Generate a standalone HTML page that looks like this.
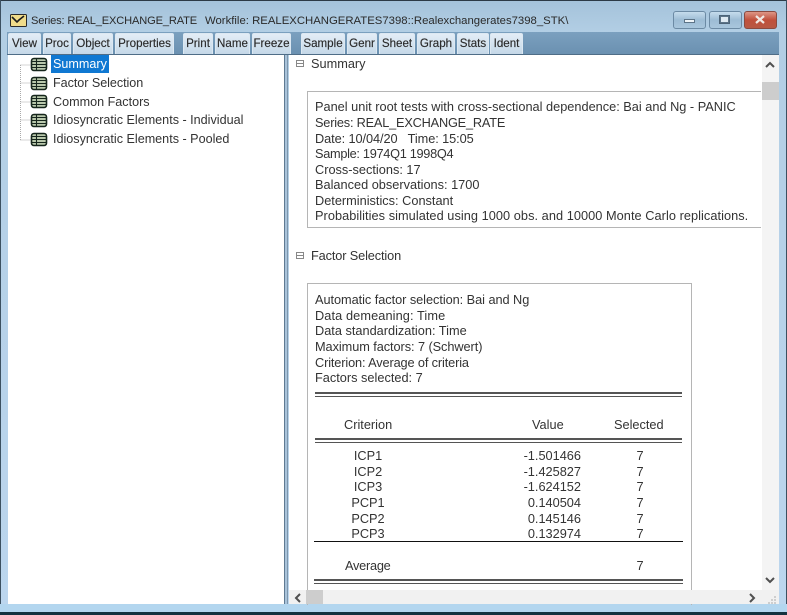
<!DOCTYPE html>
<html><head><meta charset="utf-8"><style>
html,body{margin:0;padding:0}
body{width:787px;height:615px;overflow:hidden;position:relative;background:#fff;font-family:"Liberation Sans",sans-serif;color:#333}
div,span.t{position:absolute;white-space:nowrap}
.t{font-size:12.75px;line-height:14px}
.tr{font-size:12.6px}
.b{top:33px;height:21px;background:linear-gradient(#e3edf6,#c5d8e8);border:1px solid #dce8f2;border-bottom:0;border-radius:2px 2px 0 0;box-sizing:border-box;font-size:11.6px;line-height:20px;text-align:center;color:#2a2a2a;-webkit-text-stroke:.15px #2a2a2a}
.l{height:1px;background:#111}
.d{height:5px;border-top:2px solid #555;border-bottom:1px solid #555;box-sizing:border-box}
.c{text-align:center;width:60px}
.r{text-align:right;width:80px}
</style></head><body>
<div style="left:0;top:0;width:787px;height:615px;background:linear-gradient(#a4c2da 0,#b2cee4 32px,#bcd6ee 100%)"></div>
<div style="left:0;top:0;width:787px;height:1px;background:#2c3a46"></div>
<div style="left:0;top:0;width:1px;height:615px;background:#3c5060"></div>
<div style="left:786px;top:0;width:1px;height:615px;background:#3c5060"></div>
<div style="left:0;top:612px;width:787px;height:3px;background:#14323f"></div>
<div style="left:0;top:604px;width:787px;height:8px;background:#b3d6ef"></div>
<div style="left:7px;top:32px;width:772px;height:23px;background:linear-gradient(#7ba0bf,#6a90b0)"></div>
<div style="left:7px;top:54px;width:772px;height:1px;background:#4f6d87"></div>

<svg style="position:absolute;left:10px;top:14px" width="17" height="13" viewBox="0 0 17 13"><rect x=".5" y=".5" width="16" height="12" rx="1" fill="#f0dc8a" stroke="#2a2a2a"/><path d="M2 3l5 5 2-2 5-4" fill="none" stroke="#1c1c1c" stroke-width="1.6"/></svg>
<span class="t" style="left:31px;top:14px;font-size:11.1px;letter-spacing:-.15px;color:#2a2a2a">Series: REAL_EXCHANGE_RATE</span>
<span class="t" style="left:205px;top:14px;font-size:11.35px;color:#2a2a2a">Workfile: REALEXCHANGERATES7398::Realexchangerates7398_STK\</span>

<div style="left:673px;top:11px;width:33px;height:18px;border:1px solid #6c8aa4;border-radius:3px;box-sizing:border-box;background:linear-gradient(#c6dcec,#9dbcd4 50%,#a9c6dc)"></div>
<div style="left:684px;top:19px;width:11px;height:4px;background:#eef4f8;border:1px solid #5d7488;box-sizing:border-box"></div>
<div style="left:709px;top:11px;width:33px;height:18px;border:1px solid #6c8aa4;border-radius:3px;box-sizing:border-box;background:linear-gradient(#c6dcec,#9dbcd4 50%,#a9c6dc)"></div>
<div style="left:719px;top:15px;width:11px;height:9px;background:#5d7488;border:1px solid #4d6478;box-sizing:border-box"></div>
<div style="left:721px;top:17px;width:7px;height:5px;background:#dfeaf2"></div>
<div style="left:744px;top:11px;width:33px;height:18px;border:1px solid #8a4a40;border-radius:3px;box-sizing:border-box;background:linear-gradient(#dd9686,#c0503c 50%,#b85844)"></div>
<svg style="position:absolute;left:754px;top:15px" width="12" height="9" viewBox="0 0 12 9"><path d="M2 1l8 7M10 1L2 8" stroke="#f0e8e4" stroke-width="2.2" fill="none"/></svg>

<div class="b" style="left:8px;width:33px">View</div>
<div class="b" style="left:43px;width:28px">Proc</div>
<div class="b" style="left:73px;width:40px">Object</div>
<div class="b" style="left:115px;width:59px">Properties</div>
<div class="b" style="left:183px;width:30px">Print</div>
<div class="b" style="left:215px;width:35px">Name</div>
<div class="b" style="left:252px;width:39px">Freeze</div>
<div class="b" style="left:301px;width:44px">Sample</div>
<div class="b" style="left:347px;width:30px">Genr</div>
<div class="b" style="left:379px;width:36px">Sheet</div>
<div class="b" style="left:417px;width:38px">Graph</div>
<div class="b" style="left:457px;width:32px">Stats</div>
<div class="b" style="left:490px;width:33px">Ident</div>

<!-- panes -->
<div style="left:8px;top:55px;width:276px;height:549px;background:#fff"></div>
<div style="left:284px;top:55px;width:4px;height:549px;background:#a9c3da;border-left:1px solid #5f7a92;border-right:1px solid #7e97ad;box-sizing:border-box"></div>
<div style="left:289px;top:55px;width:490px;height:549px;background:#fff"></div>

<!-- tree -->
<svg style="position:absolute;left:8px;top:55px" width="40" height="95" viewBox="0 0 40 95"><path d="M12.5 10V86M12.5 10H23M12.5 28H23M12.5 47H23M12.5 65H23M12.5 85H23" stroke="#aaa" stroke-dasharray="1 1" fill="none"/>
<g id="ic"><rect x="23.5" y="3.5" width="15" height="12" rx="2.5" fill="#b9c8ac" stroke="#16261c" stroke-width="1.6"/><path d="M24 6.5h14M24 9.5h14M24 12.5h14M28.5 4v11" stroke="#16261c" stroke-width="1.1"/></g>
<use href="#ic" y="19"/><use href="#ic" y="37"/><use href="#ic" y="56"/><use href="#ic" y="75"/></svg>
<div style="left:51px;top:55px;width:58px;height:18px;background:#0f78d2"></div>
<span class="t tr" style="left:53px;top:57px;color:#fff">Summary</span>
<span class="t tr" style="left:53px;top:76px;letter-spacing:-.05px">Factor Selection</span>
<span class="t tr" style="left:53px;top:95px">Common Factors</span>
<span class="t tr" style="left:53px;top:113px">Idiosyncratic Elements - Individual</span>
<span class="t tr" style="left:53px;top:132px">Idiosyncratic Elements - Pooled</span>

<!-- right -->
<div style="left:296px;top:60px;width:8px;height:7px;border:1px solid #888;box-sizing:border-box;background:linear-gradient(#888,#888) center/6px 1px no-repeat #fff"></div>
<span class="t" style="left:311px;top:57px">Summary</span>
<div style="left:307px;top:91px;width:454px;height:137px;border:1px solid #b5b5b5;border-right:0;box-sizing:border-box"></div>
<span class="t" style="left:315px;top:100px">Panel unit root tests with cross-sectional dependence: Bai and Ng - PANIC</span>
<span class="t" style="left:315px;top:115.5px;letter-spacing:-.2px">Series: REAL_EXCHANGE_RATE</span>
<span class="t" style="left:315px;top:131.5px;letter-spacing:-.08px">Date: 10/04/20 &nbsp; Time: 15:05</span>
<span class="t" style="left:315px;top:147px;letter-spacing:-.3px">Sample: 1974Q1 1998Q4</span>
<span class="t" style="left:315px;top:162.5px">Cross-sections: 17</span>
<span class="t" style="left:315px;top:178px">Balanced observations: 1700</span>
<span class="t" style="left:315px;top:193.5px">Deterministics: Constant</span>
<span class="t" style="left:315px;top:209px;letter-spacing:.05px">Probabilities simulated using 1000 obs. and 10000 Monte Carlo replications.</span>

<div style="left:296px;top:252px;width:8px;height:7px;border:1px solid #888;box-sizing:border-box;background:linear-gradient(#888,#888) center/6px 1px no-repeat #fff"></div>
<span class="t" style="left:311px;top:249px;letter-spacing:-.13px">Factor Selection</span>
<div style="left:307px;top:283px;width:385px;height:322px;border:1px solid #b5b5b5;border-bottom:0;box-sizing:border-box"></div>
<span class="t" style="left:315px;top:293px;letter-spacing:-.05px">Automatic factor selection: Bai and Ng</span>
<span class="t" style="left:315px;top:308.5px;letter-spacing:.1px">Data demeaning: Time</span>
<span class="t" style="left:315px;top:324px">Data standardization: Time</span>
<span class="t" style="left:315px;top:339.5px;letter-spacing:-.07px">Maximum factors: 7 (Schwert)</span>
<span class="t" style="left:315px;top:355.5px;letter-spacing:-.13px">Criterion: Average of criteria</span>
<span class="t" style="left:315px;top:371px">Factors selected: 7</span>
<div class="d" style="left:315px;top:392px;width:367px"></div>
<span class="t" style="left:344px;top:418px">Criterion</span>
<span class="t" style="left:532px;top:418px">Value</span>
<span class="t" style="left:614px;top:418px">Selected</span>
<div class="d" style="left:315px;top:438px;width:367px"></div>

<span class="t c" style="left:338px;top:449px">ICP1</span><span class="t r" style="left:501px;top:449px">-1.501466</span><span class="t c" style="left:610px;top:449px">7</span>
<span class="t c" style="left:338px;top:464.5px">ICP2</span><span class="t r" style="left:501px;top:464.5px">-1.425827</span><span class="t c" style="left:610px;top:464.5px">7</span>
<span class="t c" style="left:338px;top:480px">ICP3</span><span class="t r" style="left:501px;top:480px">-1.624152</span><span class="t c" style="left:610px;top:480px">7</span>
<span class="t c" style="left:338px;top:496px">PCP1</span><span class="t r" style="left:501px;top:496px">0.140504</span><span class="t c" style="left:610px;top:496px">7</span>
<span class="t c" style="left:338px;top:511.5px">PCP2</span><span class="t r" style="left:501px;top:511.5px">0.145146</span><span class="t c" style="left:610px;top:511.5px">7</span>
<span class="t c" style="left:338px;top:527px">PCP3</span><span class="t r" style="left:501px;top:527px">0.132974</span><span class="t c" style="left:610px;top:527px">7</span>
<div class="l" style="left:314px;top:541px;width:369px"></div>
<span class="t" style="left:345px;top:558.5px;letter-spacing:-.25px">Average</span>
<span class="t c" style="left:610px;top:558.5px">7</span>
<div class="d" style="left:314px;top:579px;width:369px"></div>

<!-- scrollbars -->
<div style="left:762px;top:55px;width:17px;height:535px;background:#f4f4f4"></div>
<div style="left:762px;top:82px;width:17px;height:18px;background:#cdcdcd"></div>
<svg style="position:absolute;left:765px;top:61px" width="10" height="7"><path d="M1 6l4-4 4 4" fill="none" stroke="#505050" stroke-width="2"/></svg>
<svg style="position:absolute;left:765px;top:577px" width="10" height="7"><path d="M1 1l4 4 4-4" fill="none" stroke="#505050" stroke-width="2"/></svg>
<div style="left:289px;top:590px;width:490px;height:14px;background:#f1f1f1"></div>
<div style="left:306px;top:590px;width:17px;height:14px;background:#cdcdcd"></div>
<svg style="position:absolute;left:294px;top:593px" width="7" height="10"><path d="M6 1L2 5l4 4" fill="none" stroke="#505050" stroke-width="2"/></svg>
<svg style="position:absolute;left:749px;top:593px" width="7" height="10"><path d="M1 1l4 4-4 4" fill="none" stroke="#505050" stroke-width="2"/></svg>
<svg style="position:absolute;left:767px;top:596px" width="10" height="8"><path d="M7 1h2M4 4h2M7 4h2M1 7h2M4 7h2M7 7h2" stroke="#aaa" fill="none"/></svg>
</body></html>
